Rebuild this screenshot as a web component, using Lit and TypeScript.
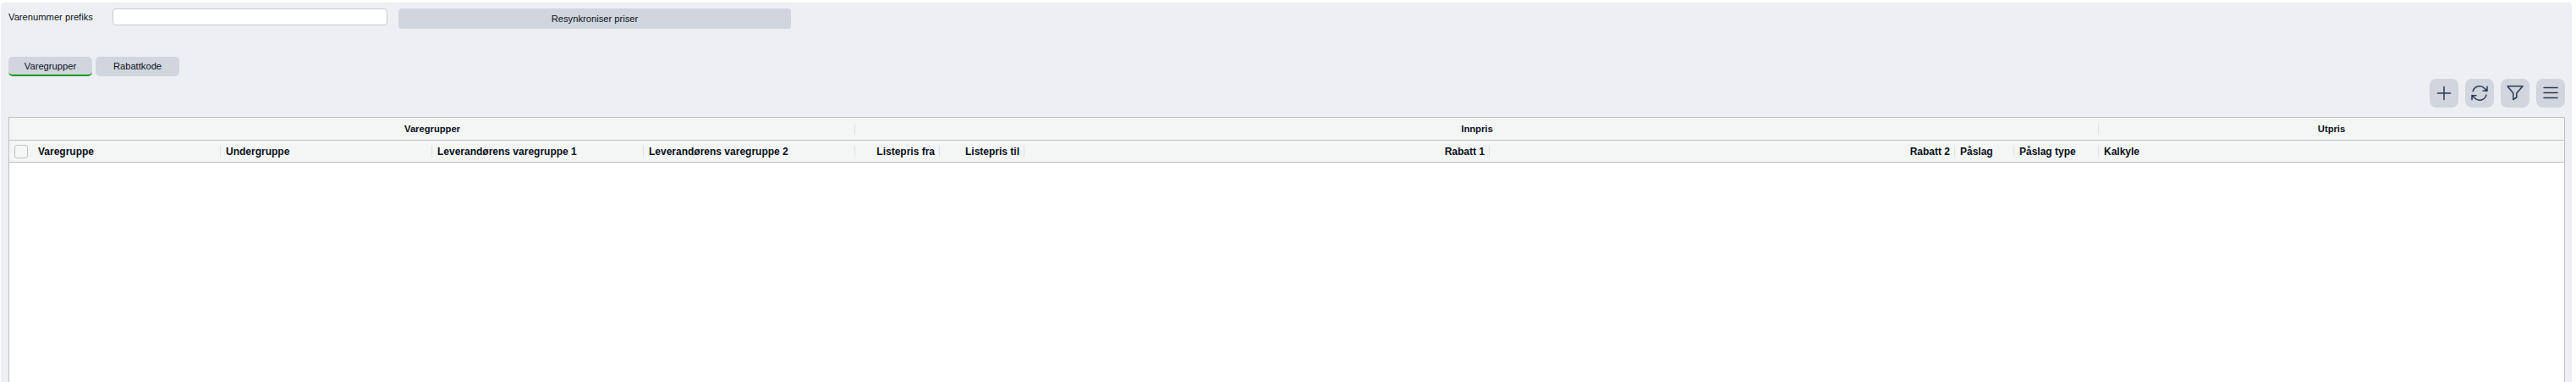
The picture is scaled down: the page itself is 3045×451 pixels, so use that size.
import { LitElement, html, css, svg } from "lit";
import { customElement } from "lit/decorators.js";

const COLS: [string, number, string][] = [
  ["Varegruppe", 250, "l"],
  ["Undergruppe", 250, "l"],
  ["Leverandørens varegruppe 1", 250, "l"],
  ["Leverandørens varegruppe 2", 250, "l"],
  ["Listepris fra", 100, "r"],
  ["Listepris til", 100, "r"],
  ["Rabatt 1", 550, "r"],
  ["Rabatt 2", 550, "r"],
  ["Påslag", 70, "l"],
  ["Påslag type", 100, "l"],
  ["Kalkyle", 0, "l"],
];

const ICONS = [
  svg`<path d="M12 4.5v15m7.5-7.5h-15"/>`,
  svg`<path d="M16.023 9.348h4.992v-.001M2.985 19.644v-4.992m0 0h4.992m-4.993 0l3.181 3.183a8.25 8.25 0 0013.803-3.7M4.031 9.865a8.25 8.25 0 0113.803-3.7l3.181 3.182m0-4.991v4.99"/>`,
  svg`<path d="M3 3.75h18l-7.2 8.25v5l-4 2.5V12z"/>`,
  svg`<path d="M4 5.5h16M4 11.5h16M4 17.5h16"/>`,
];

@customElement("app-root")
export class AppRoot extends LitElement {
  static styles = css`
    :host { display: block; width: 3045px; height: 451px; background: #fff; overflow: hidden; font-family: "Liberation Sans", Arial, sans-serif; color: #0b0f19; }
    .page { box-sizing: border-box; width: 3039px; height: 448px; margin: 3px 0 0 1px; background: #eeeff3; border-top-left-radius: 4px; border-top-right-radius: 4px; box-shadow: 0 0 3px rgba(0, 0, 0, 0.04); padding: 7px 8px 0 9px; }
    .top { display: flex; align-items: flex-start; height: 24px; }
    .lbl { width: 123px; font-size: 11.2px; line-height: 20px; }
    .inp { box-sizing: border-box; width: 325px; height: 20px; background: #fff; border: 1px solid #c9cacd; border-radius: 4px; margin-right: 13px; }
    .sync { width: 464px; height: 24px; border: 0; padding: 0; background: #d0d5de; border-radius: 4px; font: 11.2px/24px "Liberation Sans", Arial, sans-serif; color: #0b0f19; text-align: center; }
    .tabs { display: flex; gap: 4px; margin-top: 33px; }
    .tab { box-sizing: border-box; width: 99px; height: 23px; background: #d0d5de; border-radius: 5px; font-size: 11.2px; line-height: 22px; text-align: center; }
    .tab.on { border-bottom: 2px solid #0d9a1a; }
    .tools { display: flex; justify-content: flex-end; gap: 8px; margin-top: 3px; }
    .tool { width: 34px; height: 34px; background: #d0d5de; border-radius: 8px; display: flex; align-items: center; justify-content: center; }
    .tool svg { width: 24px; height: 24px; fill: none; stroke: #2d3a55; stroke-width: 1.5; stroke-linecap: round; stroke-linejoin: round; }
    .grid { box-sizing: border-box; width: 3022px; height: 400px; margin-top: 11px; background: #fff; border: 1px solid #bdbfc3; }
    .row { box-sizing: border-box; display: flex; height: 27px; background: #f4f6f6; border-bottom: 1px solid #bdbfc3; font-size: 12px; font-weight: 700; align-items: center; }
    .row.two { height: 26px; }
    .band { position: relative; box-sizing: border-box; height: 100%; display: flex; align-items: center; justify-content: center; font-size: 11.2px; }
    .cell { position: relative; box-sizing: border-box; height: 100%; display: flex; align-items: center; padding: 0 6px; white-space: nowrap; }
    .cell.r { justify-content: flex-end; }
    .sep::after { content: ""; position: absolute; right: 0; top: 6px; bottom: 6px; width: 1px; background: #dfe1e2; }
    .band.sep::after { top: 7px; bottom: 6px; }
    .box { box-sizing: border-box; flex: none; width: 16px; height: 16px; margin-right: 12px; border: 1px solid #bfc3c8; border-radius: 3px; background: #f4f6f6; }
  `;

  render() {
    return html`<div class="page">
      <div class="top">
        <div class="lbl">Varenummer prefiks</div>
        <div class="inp"></div>
        <button class="sync">Resynkroniser priser</button>
      </div>
      <div class="tabs">
        <div class="tab on">Varegrupper</div>
        <div class="tab">Rabattkode</div>
      </div>
      <div class="tools">
        ${ICONS.map((i) => html`<div class="tool"><svg viewBox="0 0 24 24">${i}</svg></div>`)}
      </div>
      <div class="grid">
        <div class="row">
          <div class="band sep" style="width:1000px">Varegrupper</div>
          <div class="band sep" style="width:1470px">Innpris</div>
          <div class="band" style="flex:1">Utpris</div>
        </div>
        <div class="row two">
          ${COLS.map(
            (c, i) => html`<div class="cell ${c[2]} ${i < COLS.length - 1 ? "sep" : ""}" style=${c[1] ? `width:${c[1]}px` : "flex:1"}>${i === 0 ? html`<div class="box"></div>` : ""}${c[0]}</div>`
          )}
        </div>
      </div>
    </div>`;
  }
}
